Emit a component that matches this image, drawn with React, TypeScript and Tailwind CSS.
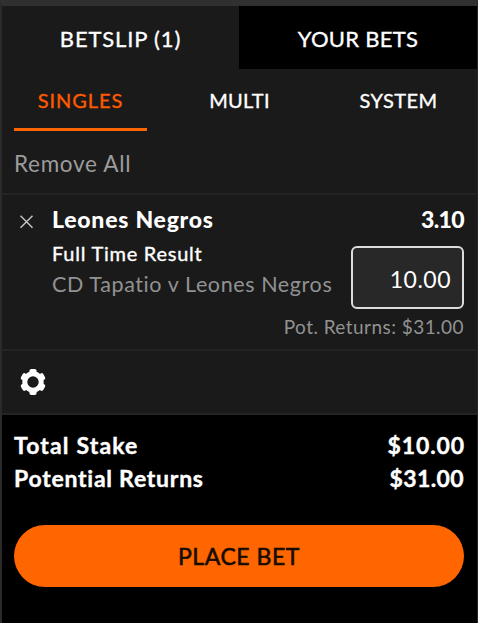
import React from 'react';

function GearIcon() {
  return (
    <svg className="block h-[26px] w-[26px]" viewBox="-13 -13 26 26" aria-hidden="true">
      <circle r="8.2" fill="none" stroke="#fff" strokeWidth="5" />
      {[0, 60, 120, 180, 240, 300].map((angle) => (
        <rect key={angle} x="-3.6" y="-12.9" width="7.2" height="6.4" rx="2" fill="#fff" transform={`rotate(${angle})`} />
      ))}
    </svg>
  );
}

function CloseIcon() {
  return (
    <svg className="block h-[14px] w-[14px]" viewBox="0 0 14 14" aria-hidden="true">
      <path d="M0.5 0.8 L12.5 12.8 M12.5 0.8 L0.5 12.8" stroke="#c4c4c4" strokeWidth="1.5" fill="none" />
    </svg>
  );
}

export default function App() {
  return (
    <main className="flex h-[623px] w-[478px] flex-col overflow-hidden whitespace-nowrap border-t-[6px] border-r border-l-2 border-t-[#303030] border-r-[#272727] border-l-[#2a2a2a] bg-[#1a1a1a] font-['Lato',sans-serif] text-white">
      <nav className="grid h-[63px] shrink-0 grid-cols-[237px_1fr] grid-rows-[63px] text-[22px] leading-[66px] [-webkit-text-stroke:0.35px_currentColor]">
        <div className="text-center tracking-[0.85px]"><span>BETSLIP (1)</span></div>
        <div className="bg-black text-center tracking-[0.3px]"><span>YOUR BETS</span></div>
      </nav>

      <div className="flex h-[62px] shrink-0 justify-between px-3 text-[20px] leading-[62px] [-webkit-text-stroke:0.35px_currentColor]">
        <div className="w-[133px] border-b-[3px] border-[#ff6600] text-center tracking-[0.9px] text-[#ff5a00]"><span>SINGLES</span></div>
        <div className="w-[133px] text-center tracking-[0.3px]"><span>MULTI</span></div>
        <div className="w-[133px] text-center tracking-[0.4px]"><span>SYSTEM</span></div>
      </div>

      <div className="h-[64px] shrink-0 border-b-2 border-[#242424] pl-3 text-[22.5px] leading-[66px] tracking-[0.7px] text-[#9c9c9c]">
        <span>Remove All</span>
      </div>

      <section className="flex h-[156px] shrink-0 border-b-2 border-[#242424] pr-[13px]">
        <div className="w-[50px] shrink-0 pl-[18px] pt-[20px]"><CloseIcon /></div>
        <div className="flex grow flex-col">
          <div className="flex h-[42px] justify-between pt-[8px] text-[23px] font-black leading-[32px]">
            <span className="tracking-[0.75px]">Leones Negros</span>
            <span className="tracking-[-0.6px]">3.10</span>
          </div>
          <div className="flex h-[72px] justify-between">
            <div>
              <div className="text-[20px] leading-[33px] tracking-[0.75px] [-webkit-text-stroke:0.35px_currentColor]"><span>Full Time Result</span></div>
              <div className="text-[21.5px] leading-[28px] tracking-[0.6px] text-[#929292]"><span>CD Tapatio v Leones Negros</span></div>
            </div>
            <div className="mt-[9px] h-[63px] w-[113px] rounded-[6px] border-2 border-[#dcdcdc] bg-[#282828] pr-[11px] text-right text-[23px] leading-[62px] tracking-[0.5px]">
              <span>10.00</span>
            </div>
          </div>
          <div className="text-right text-[19px] leading-[36px] tracking-[0.45px] text-[#929292]"><span>Pot. Returns: $31.00</span></div>
        </div>
      </section>

      <div className="h-[64px] shrink-0 border-b-2 border-[#242424] pl-[18px] pt-[18px]"><GearIcon /></div>

      <footer className="grow bg-black pl-3 pr-[13px] pt-[14px]">
        <div className="flex justify-between text-[23px] font-bold leading-[33px] [-webkit-text-stroke:0.4px_currentColor]">
          <span className="tracking-[1.15px]">Total Stake</span>
          <span className="-mr-px tracking-[0.9px]">$10.00</span>
        </div>
        <div className="flex justify-between text-[23px] font-bold leading-[33px] [-webkit-text-stroke:0.4px_currentColor]">
          <span className="tracking-[0.75px]">Potential Returns</span>
          <span className="tracking-[0.4px]">$31.00</span>
        </div>
        <button className="mt-[30px] block h-[62px] w-full rounded-full bg-[#ff6600] text-center text-[23px] leading-[60px] tracking-[0.55px] text-[#160c00] [-webkit-text-stroke:0.6px_currentColor]">
          <span>PLACE BET</span>
        </button>
      </footer>
    </main>
  );
}
